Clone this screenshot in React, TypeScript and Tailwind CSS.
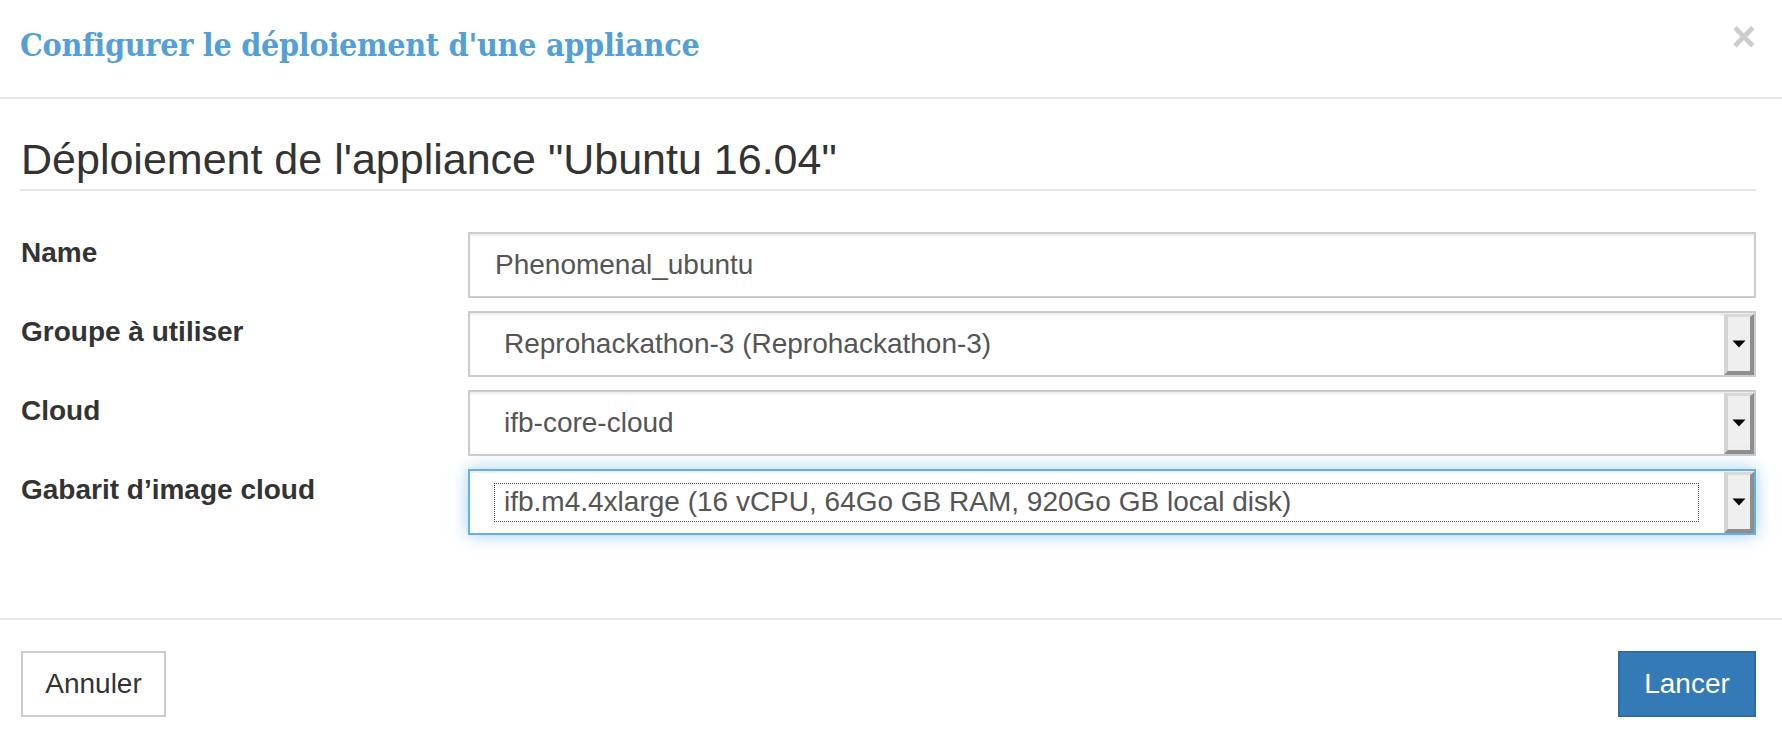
import React from "react";

function Arrow() {
  return (
    <svg width="14" height="8" viewBox="0 0 14 8" className="block">
      <polygon points="0.5,0.5 13.5,0.5 7,7.5" fill="#000" />
    </svg>
  );
}

function SelectBox({ value, focused }: { value: string; focused?: boolean }) {
  const cls = focused
    ? "border-[#66afe9] shadow-[inset_0_2px_2px_rgba(0,0,0,0.075),0_0_16px_rgba(102,175,233,0.6)]"
    : "border-[#cccccc] shadow-[inset_0_2px_2px_rgba(0,0,0,0.075)]";
  return (
    <div className={"flex h-[66px] w-full border-2 bg-white " + cls}>
      <div className="flex flex-1 items-center pl-[24px] pr-[25px]">
        <div
          className={
            "flex h-[39px] w-full items-center pl-[9px] " +
            (focused ? "border border-dotted border-[#555]" : "border border-transparent")
          }
        >
          <span className="text-[28px] leading-none text-[#555]">{value}</span>
        </div>
      </div>
      <div className="mt-[1px] flex w-[30px] items-center justify-center border-t-[3px] border-r-[4px] border-b-[4px] border-l-[4px] border-t-[#d9d9d9] border-r-[#8e8e8e] border-b-[#8e8e8e] border-l-[#d4d4d4] bg-[#efefef]">
        <Arrow />
      </div>
    </div>
  );
}

function Row({ label, children }: { label: string; children: React.ReactNode }) {
  return (
    <div className="mb-[13px] flex">
      <div className="w-[448px] shrink-0 pl-[1px] pt-[1px]">
        <span className="text-[28px] font-bold leading-[40px] text-[#333]">{label}</span>
      </div>
      <div className="flex-1">{children}</div>
    </div>
  );
}

export default function App() {
  return (
    <div
      className="h-[742px] w-[1782px] overflow-hidden bg-white"
      style={{ fontFamily: '"Liberation Sans", Arial, sans-serif' }}
    >
      {/* header */}
      <div className="flex h-[99px] items-start justify-between border-b-2 border-[#e5e5e5] pl-[20px] pr-[26px]">
        <h4
          className="pt-[27px] text-[32px] font-bold leading-[36px] tracking-[-0.3px] text-[#559fd8]"
          style={{ fontFamily: '"DejaVu Serif Condensed", "DejaVu Serif", serif' }}
        >
          Configurer le déploiement d'une appliance
        </h4>
        <span className="mt-[16px] text-[42px] font-bold leading-[42px] text-[#cccccc]">×</span>
      </div>

      {/* body */}
      <div className="pb-[70px] pl-[20px] pr-[26px] pt-[37px]">
        <h3 className="border-b-2 border-[#e5e5e5] pb-[6px] pl-[1px] text-[43px] leading-[47px] text-[#333]">
          Déploiement de l'appliance "Ubuntu 16.04"
        </h3>
        <div className="mt-[41px]">
          <Row label="Name">
            <div className="flex h-[66px] w-full items-center border-2 border-[#cccccc] bg-white pl-[25px] shadow-[inset_0_2px_2px_rgba(0,0,0,0.075)]">
              <span className="text-[28px] leading-none text-[#555]">Phenomenal_ubuntu</span>
            </div>
          </Row>
          <Row label="Groupe à utiliser">
            <SelectBox value="Reprohackathon-3 (Reprohackathon-3)" />
          </Row>
          <Row label="Cloud">
            <SelectBox value="ifb-core-cloud" />
          </Row>
          <Row label="Gabarit d’image cloud">
            <SelectBox value="ifb.m4.4xlarge (16 vCPU, 64Go GB RAM, 920Go GB local disk)" focused />
          </Row>
        </div>
      </div>

      {/* footer */}
      <div className="flex justify-between border-t-2 border-[#e5e5e5] pl-[21px] pr-[26px] pt-[31px]">
        <button className="flex h-[66px] w-[145px] items-center justify-center border-2 border-[#cccccc] bg-white text-[28px] text-[#333]">
          Annuler
        </button>
        <button className="flex h-[66px] w-[138px] items-center justify-center border-2 border-[#2e6da4] bg-[#337ab7] text-[28px] text-white">
          Lancer
        </button>
      </div>
    </div>
  );
}
